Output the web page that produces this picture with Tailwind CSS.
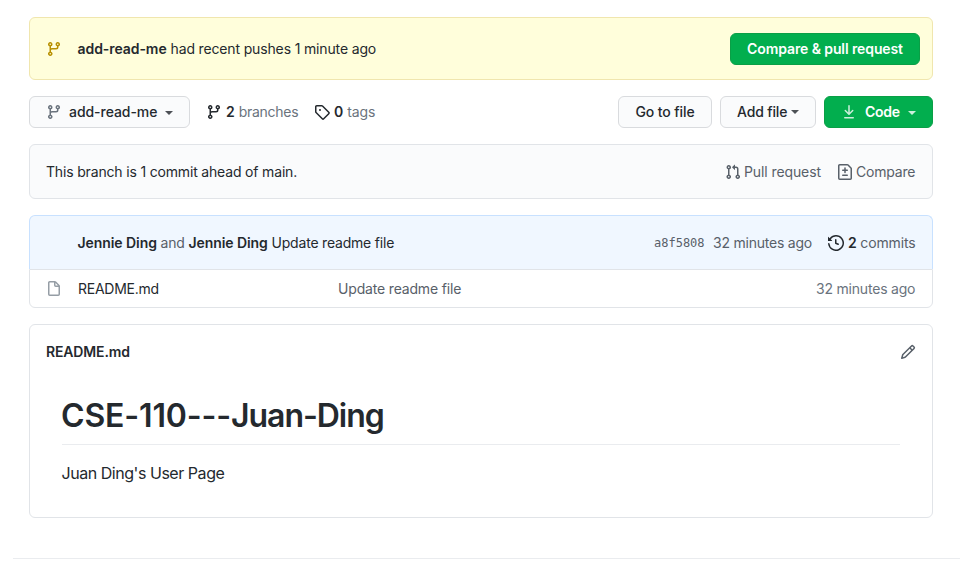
<!DOCTYPE html>
<html lang="en">
<head>
<meta charset="utf-8">
<title>Repository</title>
<script src="https://cdn.jsdelivr.net/npm/@tailwindcss/browser@4"></script>
</head>
<body class="bg-white font-['Inter',sans-serif] text-[14px] leading-5 text-[#24292e] h-[568px] overflow-hidden whitespace-nowrap">
<svg class="hidden">
  <symbol id="branch" viewBox="0 0 16 16"><path fill-rule="evenodd" d="M11.75 2.5a.75.75 0 100 1.5.75.75 0 000-1.5zm-2.25.75a2.25 2.25 0 113 2.122V6A2.5 2.5 0 0110 8.5H6a1 1 0 00-1 1v1.128a2.251 2.251 0 11-1.5 0V5.372a2.25 2.25 0 111.5 0v1.836A2.492 2.492 0 016 7h4a1 1 0 001-1v-.628A2.25 2.25 0 019.5 3.25zM4.25 12a.75.75 0 100 1.5.75.75 0 000-1.5zM3.5 3.25a.75.75 0 111.5 0 .75.75 0 01-1.5 0z"/></symbol>
</svg>
<main class="ml-[29px] w-[904px] pt-[17px] flex flex-col gap-4">
  <section class="h-[63px] shrink-0 flex items-center rounded-md border border-[#f0e6ae] bg-[#fffedb] pl-4 pr-3">
    <svg class="size-4 fill-[#b89000]"><use href="#branch"/></svg>
    <p class="ml-[15.5px]"><span class="font-semibold tracking-[-0.07px]">add-read-me</span> <span class="tracking-[-0.15px]">had recent pushes 1 minute ago</span></p>
    <button class="ml-auto w-[190px] h-8 rounded-md border border-[#0a9f46] bg-[#02ae4e] text-white font-semibold"><span class="tracking-[-0.1px]">Compare &amp; pull request</span></button>
  </section>

  <section class="h-8 shrink-0 flex items-center">
    <button class="w-[161px] h-8 flex items-center rounded-md border border-[#d9dbde] bg-[#fafbfc] pl-4 font-medium">
      <svg class="size-4 fill-[#6a737d]"><use href="#branch"/></svg>
      <span class="ml-[7px] w-[89px] text-left tracking-[-0.05px]">add-read-me</span>
      <span class="ml-[7px] mt-px border-x-4 border-x-transparent border-t-4 border-t-[#4d5156]"></span>
    </button>
    <svg class="ml-4 size-4 fill-[#24292e]"><use href="#branch"/></svg>
    <a class="ml-1 w-[72px] text-[#6a737d]"><strong class="font-semibold text-[#24292e]">2</strong> <span class="tracking-[-0.27px]">branches</span></a>
    <svg class="ml-4 size-4 fill-[#24292e]" viewBox="0 0 16 16"><path fill-rule="evenodd" d="M2.5 7.775V2.75a.25.25 0 01.25-.25h5.025a.25.25 0 01.177.073l6.25 6.25a.25.25 0 010 .354l-5.025 5.025a.25.25 0 01-.354 0l-6.25-6.25a.25.25 0 01-.073-.177zm-1.5 0V2.75C1 1.784 1.784 1 2.75 1h5.025c.464 0 .91.184 1.238.513l6.25 6.25a1.75 1.75 0 010 2.474l-5.026 5.026a1.75 1.75 0 01-2.474 0l-6.25-6.25A1.75 1.75 0 011 7.775zM6 5a1 1 0 100 2 1 1 0 000-2z"/></svg>
    <a class="ml-1 text-[#6a737d]"><strong class="font-semibold text-[#24292e]">0</strong> <span class="tracking-[-0.1px]">tags</span></a>
    <div class="ml-auto flex gap-2 font-medium">
      <button class="w-[94px] h-8 rounded-md border border-[#d9dbde] bg-[#fafbfc]"><span class="tracking-[-0.1px]">Go to file</span></button>
      <button class="w-[96px] h-8 flex items-center rounded-md border border-[#d9dbde] bg-[#fafbfc] pl-4"><span class="w-[50px] text-left tracking-[-0.15px]">Add file</span><span class="ml-1 border-x-4 border-x-transparent border-t-4 border-t-[#4d5156]"></span></button>
      <button class="w-[109px] h-8 flex items-center rounded-md border border-[#0a9f46] bg-[#02ae4e] pl-4 text-white font-semibold">
        <svg class="size-4 fill-white/80" viewBox="0 0 16 16"><path fill-rule="evenodd" d="M7.47 10.78a.75.75 0 001.06 0l3.75-3.75a.75.75 0 00-1.06-1.06L8.75 8.44V1.75a.75.75 0 00-1.5 0v6.69L4.78 5.97a.75.75 0 00-1.06 1.06l3.75 3.75zM3.75 13a.75.75 0 000 1.5h8.5a.75.75 0 000-1.5h-8.5z"/></svg>
        <span class="ml-2 w-[35px] text-left tracking-[-0.25px]">Code</span>
        <span class="ml-2 mt-px border-x-4 border-x-transparent border-t-4 border-t-white/80"></span>
      </button>
    </div>
  </section>

  <section class="h-[55px] shrink-0 flex items-center rounded-md border border-[#e1e4e8] bg-[#fafbfc] px-4">
    <p class="tracking-[-0.17px]">This branch is 1 commit ahead of main.</p>
    <a class="ml-auto flex items-center text-[#586069]">
      <svg class="size-4 fill-[#586069]" viewBox="0 0 16 16"><path fill-rule="evenodd" d="M7.177 3.073L9.573.677A.25.25 0 0110 .854v4.792a.25.25 0 01-.427.177L7.177 3.427a.25.25 0 010-.354zM3.75 2.5a.75.75 0 100 1.5.75.75 0 000-1.5zm-2.25.75a2.25 2.25 0 113 2.122v5.256a2.251 2.251 0 11-1.5 0V5.372A2.25 2.25 0 011.5 3.25zM11 2.5h-1V4h1a1 1 0 011 1v5.628a2.251 2.251 0 101.5 0V5A2.5 2.5 0 0011 2.5zm1 10.25a.75.75 0 111.5 0 .75.75 0 01-1.5 0zM3.75 12a.75.75 0 100 1.5.75.75 0 000-1.5z"/></svg>
      <span class="ml-[3px] w-[77px] tracking-[-0.1px]">Pull request</span></a>
    <a class="ml-4 flex items-center text-[#586069]">
      <svg class="size-4 fill-[#586069]" viewBox="0 0 16 16"><path fill-rule="evenodd" d="M2.75 1.5a.25.25 0 00-.25.25v12.5c0 .138.112.25.25.25h10.5a.25.25 0 00.25-.25V4.664a.25.25 0 00-.073-.177l-2.914-2.914a.25.25 0 00-.177-.073H2.75zM1 1.75C1 .784 1.784 0 2.75 0h7.586c.464 0 .909.184 1.237.513l2.914 2.914c.329.328.513.773.513 1.237v9.586A1.75 1.75 0 0113.25 16H2.75A1.75 1.75 0 011 14.25V1.75zm7 1.5a.75.75 0 01.75.75v1.5h1.5a.75.75 0 010 1.5h-1.5v1.5a.75.75 0 01-1.5 0V7h-1.5a.75.75 0 010-1.5h1.5V4A.75.75 0 018 3.25zm-3 8a.75.75 0 01.75-.75h4.5a.75.75 0 010 1.5h-4.5a.75.75 0 01-.75-.75z"/></svg>
      <span class="ml-[3px] w-[60px] tracking-[-0.2px]">Compare</span></a>
  </section>

  <section class="shrink-0">
    <div class="h-[54px] flex items-center rounded-t-md border border-b-0 border-[#c8e1ff] bg-[#f0f7ff] pl-[47.5px] pr-4">
      <p class="tracking-[-0.2px]"><span class="font-semibold tracking-[-0.07px]">Jennie Ding</span> <span class="text-[#586069] tracking-[-0.2px]">and</span> <span class="font-semibold tracking-[-0.07px]">Jennie Ding</span> <span>Update readme file</span></p>
      <span class="ml-auto w-[51px] font-['DejaVu_Sans_Mono',monospace] text-[12px] text-[#586069]">a8f5808</span>
      <span class="ml-2 w-[100px] tracking-[-0.22px] text-[#586069]">32 minutes ago</span>
      <svg class="ml-[15px] size-4 fill-[#24292e]" viewBox="0 0 16 16"><path fill-rule="evenodd" d="M1.643 3.143L.427 1.927A.25.25 0 000 2.104V5.75c0 .138.112.25.25.25h3.646a.25.25 0 00.177-.427L2.715 4.215a6.5 6.5 0 11-1.18 4.458.75.75 0 10-1.493.154 8.001 8.001 0 101.6-5.684zM7.75 4a.75.75 0 01.75.75v2.992l2.028.812a.75.75 0 01-.557 1.392l-2.5-1A.75.75 0 017 8.25v-3.5A.75.75 0 017.75 4z"/></svg>
      <span class="ml-1 w-[68px] tracking-[-0.15px] text-[#586069]"><strong class="font-semibold text-[#24292e]">2</strong> commits</span>
    </div>
    <div class="h-[39px] flex items-center rounded-b-md border border-[#e1e4e8] pl-4 pr-4">
      <svg class="size-4 fill-[#959da5]" viewBox="0 0 16 16"><path fill-rule="evenodd" d="M3.75 1.5a.25.25 0 00-.25.25v11.5c0 .138.112.25.25.25h8.5a.25.25 0 00.25-.25V6H9.75A1.75 1.75 0 018 4.25V1.5H3.75zm5.75.56v2.19c0 .138.112.25.25.25h2.19L9.5 2.06zM2 1.75C2 .784 2.784 0 3.75 0h5.086c.464 0 .909.184 1.237.513l3.414 3.414c.329.328.513.773.513 1.237v8.086A1.75 1.75 0 0112.25 15h-8.5A1.75 1.75 0 012 13.25V1.75z"/></svg>
      <span class="ml-4 w-[260px] tracking-[-0.25px]">README.md</span>
      <span class="tracking-[-0.17px] text-[#586069]">Update readme file</span>
      <span class="ml-auto w-[100px] tracking-[-0.2px] text-[#6a737d]">32 minutes ago</span>
    </div>
  </section>

  <section class="h-[194px] shrink-0 rounded-md border border-[#e1e4e8]">
    <div class="flex items-center justify-between px-4 pt-[17px]">
      <h2 class="font-semibold tracking-[-0.15px]">README.md</h2>
      <svg class="size-4 fill-[#586069]" viewBox="0 0 16 16"><path fill-rule="evenodd" d="M11.013 1.427a1.75 1.75 0 012.474 0l1.086 1.086a1.75 1.75 0 010 2.474l-8.61 8.61c-.21.21-.47.364-.756.445l-3.251.93a.75.75 0 01-.927-.928l.929-3.25a1.75 1.75 0 01.445-.758l8.61-8.61zm1.414 1.06a.25.25 0 00-.354 0L10.811 3.75l1.439 1.44 1.263-1.263a.25.25 0 000-.354l-1.086-1.086zM11.189 6.25L9.75 4.81l-6.286 6.287a.25.25 0 00-.064.108l-.558 1.953 1.953-.558a.249.249 0 00.108-.064l6.286-6.286z"/></svg>
    </div>
    <article class="mx-8 mt-8">
      <h1 class="h-[51px] border-b border-[#eaecef] text-[32px] leading-[43px] font-semibold -indent-px"><span class="tracking-[-0.15px]">CSE-110---</span><span class="tracking-[-1.05px]">Juan-Ding</span></h1>
      <p class="mt-4 text-base leading-6 tracking-[-0.46px] -indent-[0.5px]">Juan Ding's User Page</p>
    </article>
  </section>
</main>
<hr class="mt-10 ml-[13px] border-[#eaecef]">
</body>
</html>
